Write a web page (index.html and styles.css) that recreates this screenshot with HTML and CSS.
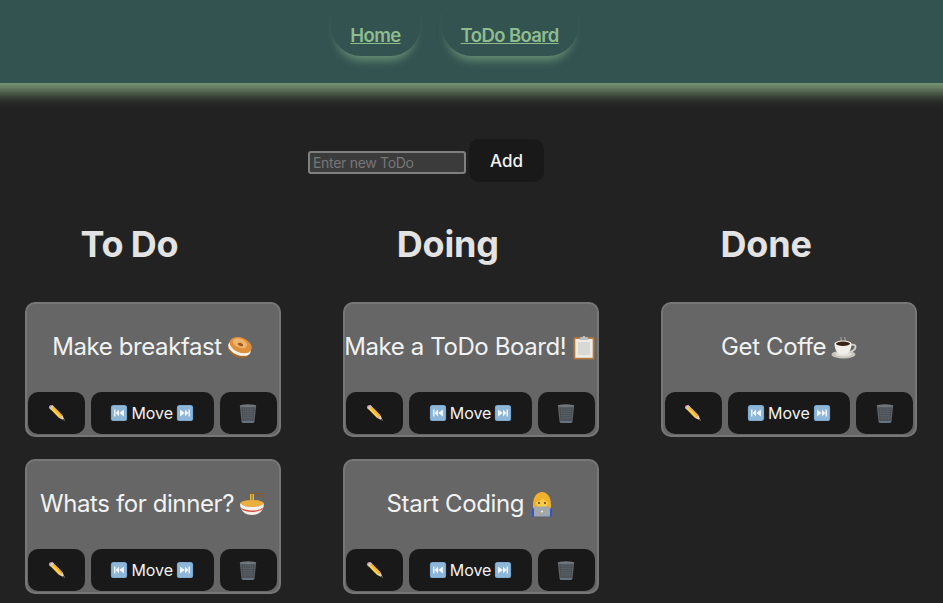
FILE: index.html
```html
<!doctype html>
<html lang="en">
<head>
	<meta charset="utf-8">
	<title>ToDo Board</title>
	<link rel="stylesheet" href="styles.css">
</head>

<body>
	<svg class="sprite" xmlns="http://www.w3.org/2000/svg">
		<symbol id="pencil" viewBox="0 0 20 20">
			<path d="M2.200 5 5.500 1.700 16 12.200l-3.500 3.300z" fill="#f5b52c"/>
			<path d="M2.200 5 3.800 3.300 14.300 13.900l-1.800 1.600z" fill="#f9cf55"/>
			<path d="M1.700 1.900c1-1 2.500-1 3.500 0l.6.600-3.300 3.300-.7-.7c-1-1-1-2.300-.1-3.200z" fill="#e8798a"/>
			<path d="m4.700 1 1.700 1.700-3.400 3.400L1.300 4.400z" fill="#c9ced3"/>
			<path d="m16 12.200 2.700 6.500-6.200-3.200z" fill="#eed2a8"/>
			<path d="m17.700 16.200 1 2.500-2.600-1.200z" fill="#444"/>
		</symbol>
		<symbol id="rewind" viewBox="0 0 20 20">
			<rect x="1" y="1" width="18" height="18" rx="3" fill="#6f9fc9"/>
			<rect x="1.800" y="1.800" width="16.400" height="16.400" rx="2.400" fill="#8db6d8"/>
			<path d="M4.500 6h1.600v8H4.500zM10 6v8L6.300 10zM15.500 6v8l-5.200-4z" fill="#f2f6fa"/>
		</symbol>
		<symbol id="forward" viewBox="0 0 20 20">
			<rect x="1" y="1" width="18" height="18" rx="3" fill="#6f9fc9"/>
			<rect x="1.800" y="1.800" width="16.400" height="16.400" rx="2.400" fill="#8db6d8"/>
			<path d="M13.900 6h1.600v8h-1.600zM10 6v8l3.700-4zM4.500 6v8l5.200-4z" fill="#f2f6fa"/>
		</symbol>
		<symbol id="trash" viewBox="0 0 20 20">
			<path d="M2.600 3.400h14.800l-1.500 14.200c-.1.800-.7 1.300-1.500 1.300H5.600c-.8 0-1.400-.5-1.500-1.300z" fill="#5f656b"/>
			<path d="M4 5h12l-1.200 12H5.200z" fill="#43484d"/>
			<path d="M4.500 6.500h11M4.700 8.500h10.600M4.900 10.500h10.200M5 12.500h10M5.200 14.500h9.600M6 5l.7 12M8 5l.3 12M10 5v12M12 5l-.3 12M14 5l-.7 12" stroke="#666d73" stroke-width=".5" fill="none"/>
			<ellipse cx="10" cy="3.400" rx="7.600" ry="1.300" fill="#6f767c"/>
			<path d="M4.300 17.200h11.400l-.2 1c-.1.500-.6.800-1.100.8H5.600c-.5 0-1-.3-1.100-.8z" fill="#64737f"/>
		</symbol>
		<symbol id="bagel" viewBox="0 0 26 26">
			<g transform="rotate(22 13 13)">
				<ellipse cx="13" cy="16" rx="11.500" ry="7.500" fill="#a9652c"/>
				<ellipse cx="13" cy="14.500" rx="11.800" ry="6.800" fill="#f7f3ea"/>
				<ellipse cx="13" cy="11" rx="11.500" ry="7.500" fill="#dd8f3c"/>
				<ellipse cx="11.500" cy="9.500" rx="7.500" ry="4.500" fill="#efb36a"/>
				<ellipse cx="12.500" cy="10.500" rx="2.800" ry="1.500" fill="#9a5a24"/>
			</g>
		</symbol>
		<symbol id="noodles" viewBox="0 0 26 26">
			<path d="M11 2.500h14M11 5h14" stroke="#8a5a2b" stroke-width="1.100" stroke-linecap="round"/>
			<path d="M11.500 3v9M13 3v9M14.500 3v9" stroke="#e8b93a" stroke-width="1"/>
			<ellipse cx="13" cy="12.500" rx="12" ry="3.500" fill="#ecae3c"/>
			<path d="M1 12.500c0 5 3 11.500 12 11.500s12-6.500 12-11.500c-3 2.500-7 3.500-12 3.500S4 15 1 12.500z" fill="#f4efe8"/>
			<path d="M1.800 16.500c2.500 2 6.500 3 11.200 3s8.700-1 11.200-3l-.7 1.800C21 20.200 17.500 21 13 21s-8-.9-10.500-2.700z" fill="#d9534a"/>
		</symbol>
		<symbol id="clipboard" viewBox="0 0 26 26">
			<rect x="2.500" y="3" width="21" height="22.500" rx="1.500" fill="#b07a3f"/>
			<rect x="4.300" y="5" width="17.400" height="18.800" fill="#ecebe8"/>
			<rect x="7" y="8" width="12" height="13" fill="#d8d8d5"/>
			<path d="M9 4.500c0-1 .5-1.500 1.500-1.500h1c0-1.500 3-1.500 3 0h1c1 0 1.500.500 1.500 1.500V6H9z" fill="#b9bdc1"/>
		</symbol>
		<symbol id="coder" viewBox="0 0 26 26">
			<path d="M3 20c0-3 2-5 4-5h12c2 0 4 2 4 5v5.500H3z" fill="#2f55c8"/>
			<path d="M4 14C4 6 8 1 13 1s9 5 9 13c0 2 0 3-1 4H5c-1-1-1-2-1-4z" fill="#f0b12d"/>
			<path d="M7 11c3 0 6-2 7-4 1 2 3 4 5 4 0 4-3 6-6 6s-6-2-6-6z" fill="#f8cd4a"/>
			<circle cx="10" cy="12" r="1" fill="#5b3a1a"/>
			<circle cx="16" cy="12" r="1" fill="#5b3a1a"/>
			<rect x="5" y="15.500" width="16" height="10" rx="1" fill="#a3a6ab"/>
			<circle cx="13" cy="20.500" r="1" fill="#eceef0"/>
		</symbol>
		<symbol id="coffee" viewBox="0 0 26 26">
			<path d="M10 3c-1 1.500 1 2 0 4M14 3c-1 1.500 1 2 0 4" stroke="#bdbdbd" stroke-width=".8" fill="none"/>
			<ellipse cx="12.500" cy="20.500" rx="12" ry="4" fill="#c9c6bd"/>
			<ellipse cx="12.500" cy="20" rx="8" ry="2.400" fill="#e4e1d9"/>
			<path d="M20 11c3-1 5 .500 4.500 2.500S21 17.500 18 18" stroke="#d4d1c9" stroke-width="1.800" fill="none"/>
			<path d="M3.500 9.500h17c0 6-2.500 11-8.500 11S3.500 15.500 3.500 9.500z" fill="#efeee8"/>
			<ellipse cx="12" cy="9.500" rx="8.500" ry="3" fill="#efeee8"/>
			<ellipse cx="12" cy="9.700" rx="7" ry="2.200" fill="#3a2115"/>
		</symbol>
	</svg>

	<div class="head">
		<nav class="nav">
			<a class="nav-link" href="#">Home</a>
			<a class="nav-link" href="#">ToDo Board</a>
		</nav>
	</div>

	<div class="new-todo">
		<input class="new-input" type="text" placeholder="Enter new ToDo">
		<button class="btn add-btn">Add</button>
	</div>

	<div class="board">
		<div class="column">
			<h1 class="column-title">To Do</h1>
			<div class="card">
				<div class="card-text">Make breakfast <svg class="emoji"><use href="#bagel"/></svg></div>
				<div class="card-actions">
					<button class="btn icon-btn"><svg class="pencil-icon"><use href="#pencil"/></svg></button>
					<button class="btn move-btn"><svg class="btn-icon"><use href="#rewind"/></svg> Move <svg class="btn-icon"><use href="#forward"/></svg></button>
					<button class="btn icon-btn"><svg class="trash-icon"><use href="#trash"/></svg></button>
				</div>
			</div>
			<div class="card">
				<div class="card-text">Whats for dinner? <svg class="emoji"><use href="#noodles"/></svg></div>
				<div class="card-actions">
					<button class="btn icon-btn"><svg class="pencil-icon"><use href="#pencil"/></svg></button>
					<button class="btn move-btn"><svg class="btn-icon"><use href="#rewind"/></svg> Move <svg class="btn-icon"><use href="#forward"/></svg></button>
					<button class="btn icon-btn"><svg class="trash-icon"><use href="#trash"/></svg></button>
				</div>
			</div>
		</div>

		<div class="column">
			<h1 class="column-title">Doing</h1>
			<div class="card">
				<div class="card-text">Make a ToDo Board! <svg class="emoji"><use href="#clipboard"/></svg></div>
				<div class="card-actions">
					<button class="btn icon-btn"><svg class="pencil-icon"><use href="#pencil"/></svg></button>
					<button class="btn move-btn"><svg class="btn-icon"><use href="#rewind"/></svg> Move <svg class="btn-icon"><use href="#forward"/></svg></button>
					<button class="btn icon-btn"><svg class="trash-icon"><use href="#trash"/></svg></button>
				</div>
			</div>
			<div class="card">
				<div class="card-text">Start Coding <svg class="emoji"><use href="#coder"/></svg></div>
				<div class="card-actions">
					<button class="btn icon-btn"><svg class="pencil-icon"><use href="#pencil"/></svg></button>
					<button class="btn move-btn"><svg class="btn-icon"><use href="#rewind"/></svg> Move <svg class="btn-icon"><use href="#forward"/></svg></button>
					<button class="btn icon-btn"><svg class="trash-icon"><use href="#trash"/></svg></button>
				</div>
			</div>
		</div>

		<div class="column">
			<h1 class="column-title">Done</h1>
			<div class="card">
				<div class="card-text">Get Coffe <svg class="emoji"><use href="#coffee"/></svg></div>
				<div class="card-actions">
					<button class="btn icon-btn"><svg class="pencil-icon"><use href="#pencil"/></svg></button>
					<button class="btn move-btn"><svg class="btn-icon"><use href="#rewind"/></svg> Move <svg class="btn-icon"><use href="#forward"/></svg></button>
					<button class="btn icon-btn"><svg class="trash-icon"><use href="#trash"/></svg></button>
				</div>
			</div>
		</div>
	</div>
</body>
</html>
```

FILE: styles.css
```css
*{ margin: 0px; padding: 0px; box-sizing: border-box; }
html, body{ height: 100%; overflow: hidden; }
body{
	background-color: #222222; color: #e6e6e6;
	font-family: Inter, "Liberation Sans", sans-serif; }

.sprite{ display: none; }

/* wider than the window so the glow does not fade at the page edges */
.head{
	background-color: #325350; height: 83px; margin: 0 -30px;
	box-shadow: 0 9px 14px #7f9f79;
	display: flex; justify-content: center; }

.nav{ display: flex; gap: 22px; height: 56px; margin-right: 34px; }

.nav-link{
	display: flex; align-items: center; justify-content: center;
	padding: 14px 19px 0px 19px; border-radius: 0 0 30px 30px;
	background-color: #325350;
	box-shadow: 0 10px 10px -6px rgba(143, 188, 143, 0.6);
	color: #8fbc8f; font-weight: 600; font-size: 18.5px; letter-spacing: -0.6px;
	text-decoration: underline; }

.new-todo{
	display: flex; align-items: flex-start; gap: 3px;
	margin-top: 56px; margin-left: 308px; }

.new-input{
	width: 158px; height: 23px; margin-top: 12px; padding: 0 3px;
	background-color: #3b3b3b; color: #e6e6e6;
	border: 2px solid #808080; border-radius: 3px;
	font-family: inherit; font-size: 14px; letter-spacing: -0.3px; outline: none; }
.new-input::placeholder{ color: #777777; opacity: 1; }

.btn{
	background-color: #191919; color: #f2f2f2; border: none;
	border-radius: 10px; font-family: inherit;
	display: flex; align-items: center; justify-content: center; }

.add-btn{ width: 75px; height: 43px; font-size: 17px; font-weight: 500; }

.board{
	display: grid; grid-template-columns: repeat(3, 256px); column-gap: 62.3px;
	margin-top: 40px; margin-left: 24.5px; }

.column-title{
	font-size: 36px; font-weight: 700; text-align: center; line-height: 44px;
	letter-spacing: -0.2px; word-spacing: -1px;
	padding-right: 46px; margin-bottom: 36px; color: #e3e3e3; }

.card{
	height: 135px; margin-bottom: 22px;
	background-color: #666666; border: 2px solid #777777; border-radius: 10px;
	display: flex; flex-direction: column; }

.card-text{
	flex: 1; display: flex; align-items: center; justify-content: center; gap: 5px;
	font-size: 24px; letter-spacing: -0.4px; color: #f2f2f2;
	white-space: nowrap; padding-bottom: 3px; }

.emoji{ width: 26px; height: 26px; flex-shrink: 0; }

.card-actions{ display: flex; gap: 6px; padding: 0 2px 1px 1.5px; }

.icon-btn{ width: 57px; height: 42px; padding-bottom: 1px; }
.move-btn{ flex: 1; height: 42px; gap: 3px; font-size: 16px; padding-bottom: 1px; }

.btn-icon{ width: 18px; height: 18px; }
.pencil-icon{ width: 18px; height: 18px; }
.trash-icon{ width: 22px; height: 22px; }
```
